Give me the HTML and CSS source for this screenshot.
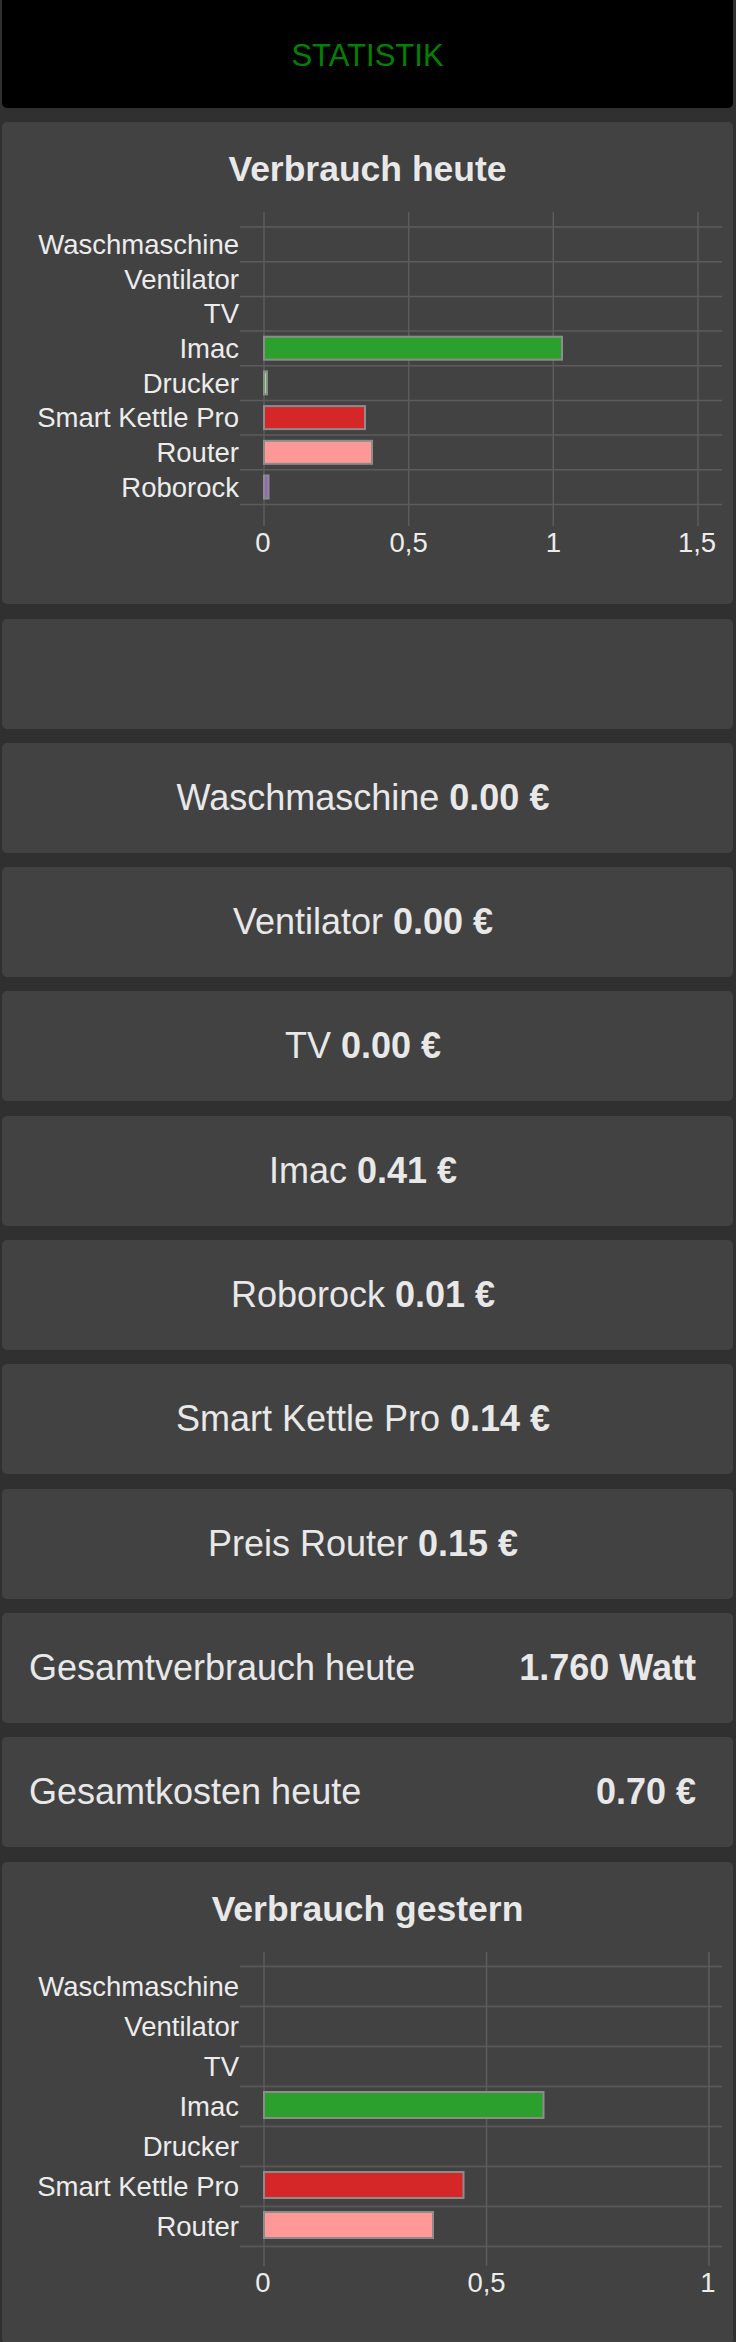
FILE: index.html
```html
<!DOCTYPE html>
<html lang="de">
<head>
  <meta charset="UTF-8" />
  <title>Statistik</title>
  <link rel="stylesheet" href="styles.css">
</head>
<body>
  <div class="page">
    <div class="topbar">STATISTIK</div>

    <div class="card chart-card">
      <h2>Verbrauch heute</h2>
      <svg class="chart" width="731" height="415" viewBox="0 0 731 415">
        <g class="grid">
          <line x1="262" y1="23" x2="262" y2="337" />
          <line x1="406.7" y1="23" x2="406.7" y2="337" />
          <line x1="551.3" y1="23" x2="551.3" y2="337" />
          <line x1="696" y1="23" x2="696" y2="337" />
          <line x1="238" y1="38" x2="720" y2="38" />
          <line x1="238" y1="72.7" x2="720" y2="72.7" />
          <line x1="238" y1="107.4" x2="720" y2="107.4" />
          <line x1="238" y1="142.1" x2="720" y2="142.1" />
          <line x1="238" y1="176.8" x2="720" y2="176.8" />
          <line x1="238" y1="211.4" x2="720" y2="211.4" />
          <line x1="238" y1="246.1" x2="720" y2="246.1" />
          <line x1="238" y1="280.8" x2="720" y2="280.8" />
          <line x1="238" y1="315.5" x2="720" y2="315.5" />
        </g>
        <g class="bars">
          <rect x="262" y="147.7" width="298" height="23" fill="#2ca02c" />
          <rect x="262" y="182.4" width="3" height="23" fill="#98df8a" />
          <rect x="262" y="217.1" width="101" height="23" fill="#d62728" />
          <rect x="262" y="251.8" width="108" height="23" fill="#ff9896" />
          <rect x="262" y="286.5" width="4.5" height="23" fill="#9467bd" />
        </g>
        <g class="labels">
          <text x="237" y="64.8">Waschmaschine</text>
          <text x="237" y="99.5">Ventilator</text>
          <text x="237" y="134.2">TV</text>
          <text x="237" y="168.9">Imac</text>
          <text x="237" y="203.6">Drucker</text>
          <text x="237" y="238.2">Smart Kettle Pro</text>
          <text x="237" y="272.9">Router</text>
          <text x="237" y="307.6">Roborock</text>
        </g>
        <g class="ticks">
          <text x="261" y="363">0</text>
          <text x="406.7" y="363">0,5</text>
          <text x="551.3" y="363">1</text>
          <text x="695" y="363">1,5</text>
        </g>
      </svg>
    </div>

    <div class="card"></div>

    <div class="card line">Waschmaschine <b>0.00 €</b></div>
    <div class="card line">Ventilator <b>0.00 €</b></div>
    <div class="card line">TV <b>0.00 €</b></div>
    <div class="card line">Imac <b>0.41 €</b></div>
    <div class="card line">Roborock <b>0.01 €</b></div>
    <div class="card line">Smart Kettle Pro <b>0.14 €</b></div>
    <div class="card line">Preis Router <b>0.15 €</b></div>

    <div class="card total">
      <span>Gesamtverbrauch heute</span>
      <b>1.760 Watt</b>
    </div>
    <div class="card total">
      <span>Gesamtkosten heute</span>
      <b>0.70 €</b>
    </div>

    <div class="card chart-card">
      <h2>Verbrauch gestern</h2>
      <svg class="chart" width="731" height="415" viewBox="0 0 731 415">
        <g class="grid">
          <line x1="262" y1="23" x2="262" y2="337" />
          <line x1="484.5" y1="23" x2="484.5" y2="337" />
          <line x1="707" y1="23" x2="707" y2="337" />
          <line x1="238" y1="37.5" x2="720" y2="37.5" />
          <line x1="238" y1="77.5" x2="720" y2="77.5" />
          <line x1="238" y1="117.5" x2="720" y2="117.5" />
          <line x1="238" y1="157.5" x2="720" y2="157.5" />
          <line x1="238" y1="197.5" x2="720" y2="197.5" />
          <line x1="238" y1="237.5" x2="720" y2="237.5" />
          <line x1="238" y1="277.5" x2="720" y2="277.5" />
          <line x1="238" y1="317.5" x2="720" y2="317.5" />
        </g>
        <g class="bars">
          <rect x="262" y="163" width="279.5" height="26" fill="#2ca02c" />
          <rect x="262" y="243" width="199.5" height="26" fill="#d62728" />
          <rect x="262" y="283" width="169" height="26" fill="#ff9896" />
        </g>
        <g class="labels">
          <text x="237" y="67">Waschmaschine</text>
          <text x="237" y="107">Ventilator</text>
          <text x="237" y="147">TV</text>
          <text x="237" y="187">Imac</text>
          <text x="237" y="227">Drucker</text>
          <text x="237" y="267">Smart Kettle Pro</text>
          <text x="237" y="307">Router</text>
        </g>
        <g class="ticks">
          <text x="261" y="363">0</text>
          <text x="484.5" y="363">0,5</text>
          <text x="706" y="363">1</text>
        </g>
      </svg>
    </div>
  </div>
</body>
</html>
```

FILE: styles.css
```css
body {
  margin: 0;
  padding: 0;
  background: #303030;
  font-family: "Liberation Sans", Arial, sans-serif;
  color: #e8e8e8;
}

.page {
  display: flex;
  flex-direction: column;
  gap: 14.3px;
  padding: 0 3px 0 2px;
}

.topbar {
  background: #000;
  color: #008000;
  height: 104px;
  padding-top: 4px;
  line-height: 104px;
  font-size: 31px;
  text-align: center;
  border-radius: 0 0 5px 5px;
}

.card {
  background: #424242;
  border-radius: 5px;
  height: 110px;
  flex-shrink: 0;
}

.chart-card {
  height: 482px;
  overflow: hidden;
}

.chart-card h2 {
  margin: 0;
  padding-top: 27px;
  font-size: 35.5px;
  line-height: 40px;
  text-align: center;
  color: #e8e8e8;
}

.chart {
  display: block;
}

.chart .grid line {
  stroke: #5c5c5c;
  stroke-width: 1.5;
}

.chart .bars rect {
  stroke: #8c8c8c;
  stroke-width: 2;
}

.chart text {
  font-family: "Liberation Sans", Arial, sans-serif;
  font-size: 27.5px;
  fill: #ececec;
}

.chart .labels text {
  text-anchor: end;
}

.chart .ticks text {
  text-anchor: middle;
}

.line {
  font-size: 36px;
  line-height: 110px;
  text-align: center;
  padding-right: 9px;
}

.total {
  display: flex;
  justify-content: space-between;
  align-items: center;
  padding: 0 37px 0 27px;
  font-size: 36px;
}
```
